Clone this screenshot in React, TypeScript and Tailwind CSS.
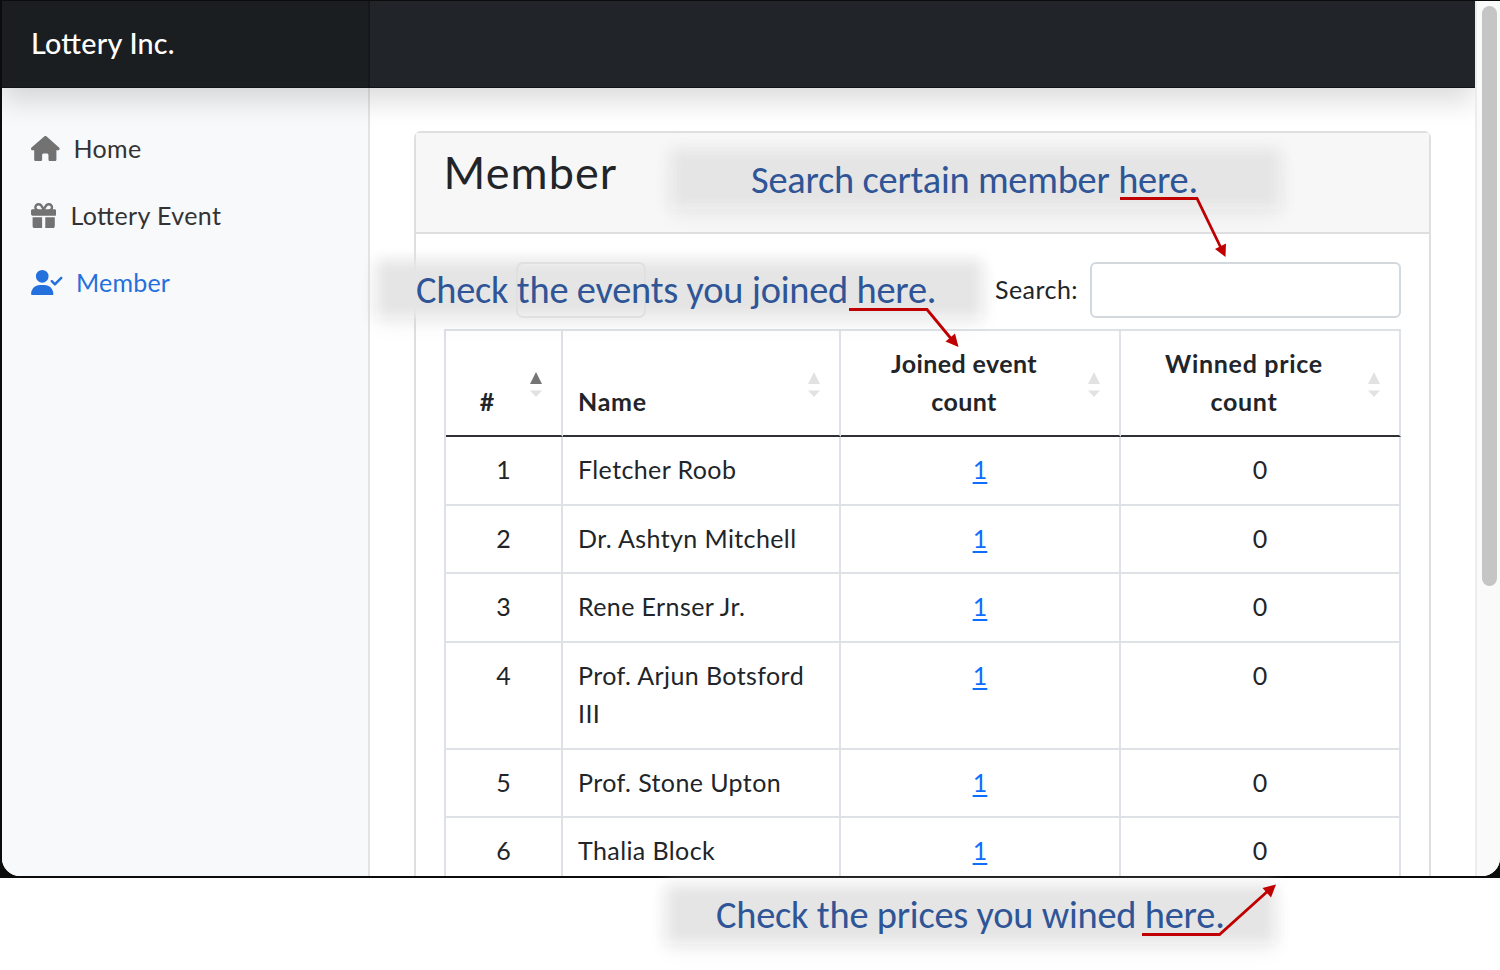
import type { ReactNode } from "react";
import { FaGift, FaHouse, FaUserCheck } from "react-icons/fa6";

type Member = { id: number; name: string; joined: number; won: number; height: string };

const members: Member[] = [
  { id: 1, name: "Fletcher Roob", joined: 1, won: 0, height: "h-[69px]" },
  { id: 2, name: "Dr. Ashtyn Mitchell", joined: 1, won: 0, height: "h-[68px]" },
  { id: 3, name: "Rene Ernser Jr.", joined: 1, won: 0, height: "h-[69px]" },
  { id: 4, name: "Prof. Arjun Botsford III", joined: 1, won: 0, height: "h-[107px]" },
  { id: 5, name: "Prof. Stone Upton", joined: 1, won: 0, height: "h-[68px]" },
  { id: 6, name: "Thalia Block", joined: 1, won: 0, height: "h-[69px]" },
];

function SortArrows({ ascending = false }: { ascending?: boolean }) {
  return (
    <svg className="absolute right-[19px] top-[41px] h-[26px] w-3" viewBox="0 0 12 26">
      <path d="M6 0 12 12H0Z" fill={ascending ? "#757575" : "#e2e2e2"} />
      <path d="M0 18.5H12L6 25Z" fill="#e2e2e2" />
    </svg>
  );
}

function HeaderCell({ children, ascending, className }: { children: ReactNode; ascending?: boolean; className: string }) {
  return (
    <th className={`relative h-[106px] border-r-2 border-b-2 border-r-[#dee2e6] border-b-[#2f3136] pb-[15px] align-bottom font-bold leading-[38px] ${className}`}>
      {children}
      <SortArrows ascending={ascending} />
    </th>
  );
}

function Callout({ children, className, textClass }: { children: ReactNode; className: string; textClass: string }) {
  return (
    <div className={`absolute ${className}`}>
      <div className="absolute inset-0 z-10 shadow-[0_8px_24px_rgba(0,0,0,0.04)]" />
      <div className="absolute inset-0 z-10 bg-[#e5e5e5] blur-[7px]" />
      <p className={`relative z-30 whitespace-nowrap font-[Carlito,Lato,sans-serif] text-[38.4px] leading-[46px] tracking-[-0.22px] text-[#2f5597] ${textClass}`}>{children}</p>
    </div>
  );
}

export default function App() {
  return (
    <div className="relative h-[970px] w-[1500px] overflow-hidden bg-white font-[Lato,sans-serif] text-[25px] tracking-[0.2px] text-[#212529] [font-feature-settings:'liga'_1]">
      <div className="h-[878px] bg-[#0c0c0c] pt-px pr-0 pb-[2px] pl-[2px]">
        <div className="flex h-[875px] overflow-hidden rounded-b-[18px] bg-white">
          <div className="flex w-[1473px] flex-col overflow-hidden">
            <header className="relative z-10 flex h-[87px] shrink-0 border-b border-[#111315] bg-[#212529] shadow-[0_13px_26px_rgba(0,0,0,0.14)]">
              <div className="flex w-[368px] items-center border-r-2 border-[#15181b] bg-[#1a1e21] pb-px pl-[29px] text-[28.7px] font-medium tracking-[0.25px] text-white">
                Lottery Inc.
              </div>
            </header>
            <div className="flex h-[788px]">
              <aside className="w-[368px] shrink-0 border-r-2 border-[#e2e3e5] bg-[#f8f9fb] pt-[27px] pl-[29px] text-[#333333]">
                <nav>
                  <a className="flex h-[67px] items-center gap-[14px] tracking-[0.3px]">
                    <FaHouse className="h-[25.4px] w-[28.6px] text-[#727272]" />
                    Home
                  </a>
                  <a className="flex h-[67px] items-center gap-[14px] tracking-[0.4px]">
                    <FaGift className="h-[25.4px] w-[25.4px] text-[#727272]" />
                    Lottery Event
                  </a>
                  <a className="flex h-[67px] items-center gap-[13px] text-[#2470dc]">
                    <FaUserCheck className="h-[25.4px] w-[32px]" />
                    Member
                  </a>
                </nav>
              </aside>
              <main className="flex-1 pt-[43px] pr-[44px] pl-[43.5px]">
                <section className="h-[800px] rounded-[7px] border-2 border-[#dfdfdf]">
                  <div className="h-[101px] border-b-2 border-[#dfdfdf] bg-[#f7f7f7] pl-[28px]">
                    <h1 className="pt-[9px] text-[45px] leading-[60px] tracking-[1.1px]">Member</h1>
                  </div>
                  <div className="pt-[28px] pr-[28px] pl-[28.5px]">
                    <div className="flex h-[56px] items-center">
                      <div className="relative z-20 ml-[72px] h-[56px] w-[130px] rounded-[7px] border-2 border-[#e0e0e0]" />
                      <label className="ml-auto flex items-center gap-[12px] tracking-[0.45px]">
                        Search:
                        <input className="h-[56px] w-[311px] rounded-[6px] border-2 border-[#d3d8dd] bg-white outline-none" />
                      </label>
                    </div>
                    <table className="mt-[11px] w-[957px] table-fixed border-separate border-spacing-0 border-t-2 border-l-2 border-[#dee2e6]">
                      <colgroup>
                        <col className="w-[117px]" />
                        <col className="w-[278px]" />
                        <col className="w-[280px]" />
                        <col className="w-[280px]" />
                      </colgroup>
                      <thead>
                        <tr>
                          <HeaderCell ascending className="pr-[33px] text-center">#</HeaderCell>
                          <HeaderCell className="pl-[15px] text-left tracking-[0.7px]">Name</HeaderCell>
                          <HeaderCell className="px-[44px] pl-[12px] text-center tracking-[0.4px]">Joined event<br />count</HeaderCell>
                          <HeaderCell className="px-[44px] pl-[12px] text-center tracking-[0.7px]">Winned price<br />count</HeaderCell>
                        </tr>
                      </thead>
                      <tbody className="align-top leading-[38px]">
                        {members.map((m) => (
                          <tr key={m.id}>
                            <td className={`border-r-2 border-b-2 border-[#dee2e6] pt-[13px] text-center ${m.height}`}>{m.id}</td>
                            <td className="border-r-2 border-b-2 border-[#dee2e6] pt-[13px] pr-[10px] pl-[15px] tracking-[0.4px]">{m.name}</td>
                            <td className="border-r-2 border-b-2 border-[#dee2e6] pt-[13px] text-center text-[#0d6efd]">
                              <a className="underline decoration-2 underline-offset-[3px]">{m.joined}</a>
                            </td>
                            <td className="border-r-2 border-b-2 border-[#dee2e6] pt-[13px] text-center">{m.won}</td>
                          </tr>
                        ))}
                      </tbody>
                    </table>
                  </div>
                </section>
              </main>
            </div>
          </div>
          <div className="w-[25px] border-l-2 border-[#ececec] bg-[#fafafa] pt-[5px] pl-[5px]">
            <div className="h-[580px] w-[15px] rounded-full bg-[#c5c5c5]" />
          </div>
        </div>
      </div>

      <Callout className="top-[149px] left-[671px] h-[60px] w-[609px]" textClass="left-[80px] top-[8px]">Search certain member here.</Callout>
      <Callout className="top-[260px] left-[376px] h-[58px] w-[606px]" textClass="left-[40px] top-[7px]">Check the events you joined here.</Callout>
      <Callout className="top-[885px] left-[666px] h-[59px] w-[609px]" textClass="left-[50px] top-[7px]">Check the prices you wined here.</Callout>

      <svg className="pointer-events-none absolute inset-0 z-40 h-[970px] w-[1500px]" viewBox="0 0 1500 970" fill="none" stroke="#c00000" strokeWidth="2.8">
        <path d="M1120 198.5H1197L1221 248" />
        <path d="M849 309.5H927L953 341" />
        <path d="M1142 934.5H1219.5L1269 890" />
        <g fill="#c00000" stroke="none">
          <path d="M1225.5 257 1215 249 1226 243.5Z" />
          <path d="M958.5 347 945.5 341.5 955 333.5Z" />
          <path d="M1276 884.5 1271 897.5 1262.5 888Z" />
        </g>
      </svg>
    </div>
  );
}
